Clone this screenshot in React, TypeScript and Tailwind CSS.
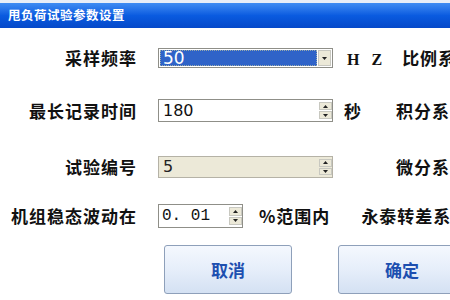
import React from "react";

const cjk = { fontFamily: '"Noto Sans CJK SC", "Noto Sans", sans-serif' };

function Spinner() {
  return (
    <div className="flex h-full w-[13px] flex-col justify-center gap-[1px] py-[2px]">
      <div className="flex flex-1 items-center justify-center border border-[#c8c8c0] bg-[#ece9d8]">
        <svg width="5" height="3" viewBox="0 0 5 3"><path d="M0 3 L2.5 0 L5 3 Z" fill="#222" /></svg>
      </div>
      <div className="flex flex-1 items-center justify-center border border-[#c8c8c0] bg-[#ece9d8]">
        <svg width="5" height="3" viewBox="0 0 5 3"><path d="M0 0 L2.5 3 L5 0 Z" fill="#222" /></svg>
      </div>
    </div>
  );
}

function Label({ children }: { children: React.ReactNode }) {
  return (
    <div className="w-[137px] shrink-0 text-right text-[17px] font-bold tracking-[1px] text-[#111]" style={cjk}>
      {children}
    </div>
  );
}

function Side({ children, className = "" }: { children: React.ReactNode; className?: string }) {
  return (
    <div className={`whitespace-nowrap text-[17px] font-bold tracking-[1px] text-[#111] ${className}`} style={cjk}>
      {children}
    </div>
  );
}

function Btn({ children }: { children: React.ReactNode }) {
  return (
    <div
      className="flex h-[49px] w-[128px] shrink-0 items-center justify-center rounded-[3px] border border-[#8ea0ba] bg-gradient-to-b from-[#f4f8fe] via-[#e6eefa] to-[#d4e1f3] text-[17px] font-bold text-[#1d4fb0]"
      style={cjk}
    >
      {children}
    </div>
  );
}

export default function App() {
  return (
    <div className="flex h-[300px] w-[450px] flex-col overflow-hidden bg-white">
      <div className="h-[3px] bg-[#e8eef8]" />
      <div
        className="flex h-[25px] items-center bg-gradient-to-b from-[#3f8cf3] via-[#0a5be0] to-[#0649c9] pl-[8px] text-[12.5px] font-bold tracking-[0.5px] text-white"
        style={cjk}
      >
        甩负荷试验参数设置
      </div>
      <div className="flex flex-1">
        <div className="w-[4px] bg-[#0a4bd0]" />
        <div className="w-[1px] bg-[#c9dcf7]" />
        <div className="flex flex-1 flex-col">
          <div className="mt-[20px] flex h-[20px] items-center">
            <Label>采样频率</Label>
            <div className="ml-[21px] flex h-[20px] w-[175px] shrink-0 items-center border border-[#8f8f88] bg-white p-[1px]">
              <div className="flex h-full flex-1 items-center border border-dotted border-[#9aa] bg-[#2f63c8] pl-[2px] text-[17px] leading-none text-white" style={{ fontFamily: '"DejaVu Sans", sans-serif' }}>
                50
              </div>
              <div className="ml-[1px] flex h-full w-[13px] items-center justify-center border border-[#c8c8c0] bg-[#ece9d8]">
                <svg width="5" height="3" viewBox="0 0 5 3"><path d="M0 0 L2.5 3 L5 0 Z" fill="#222" /></svg>
              </div>
            </div>
            <Side className="ml-[14px]">
              <span style={{ fontFamily: '"Liberation Serif", serif' }} className="text-[16px] font-bold tracking-[4px]">H Z</span>
            </Side>
            <Side className="ml-[16px]">比例系数</Side>
          </div>

          <div className="mt-[31px] flex h-[23px] items-center">
            <Label>最长记录时间</Label>
            <div className="ml-[21px] flex h-[23px] w-[175px] shrink-0 items-center border border-[#8f8f88] bg-white">
              <div className="flex-1 pl-[4px] text-[16px] leading-none text-[#111]" style={{ fontFamily: '"DejaVu Sans", sans-serif' }}>
                180
              </div>
              <Spinner />
            </div>
            <Side className="ml-[11px]">秒</Side>
            <Side className="ml-[34px]">积分系数</Side>
          </div>

          <div className="mt-[34px] flex h-[22px] items-center">
            <Label>试验编号</Label>
            <div className="ml-[21px] flex h-[22px] w-[175px] shrink-0 items-center border border-[#b5b2a6] bg-[#ece9d8]">
              <div className="flex-1 pl-[4px] text-[16px] leading-none text-[#222]" style={{ fontFamily: '"DejaVu Sans", sans-serif' }}>
                5
              </div>
              <Spinner />
            </div>
            <Side className="ml-[63px]">微分系数</Side>
          </div>

          <div className="mt-[26px] flex h-[24px] items-center">
            <Label>机组稳态波动在</Label>
            <div className="ml-[21px] flex h-[24px] w-[85px] shrink-0 items-center border border-[#8f8f88] bg-white">
              <div className="flex-1 pl-[3px] text-[16px] leading-none text-[#111]" style={{ fontFamily: '"Liberation Mono", monospace' }}>
                0.&nbsp;01
              </div>
              <Spinner />
            </div>
            <Side className="ml-[16px]">%范围内</Side>
            <Side className="ml-[31px]">永泰转差系数</Side>
          </div>

          <div className="mt-[17px] flex gap-[46px] pl-[164px]">
            <Btn>取消</Btn>
            <Btn>确定</Btn>
          </div>
        </div>
      </div>
    </div>
  );
}
